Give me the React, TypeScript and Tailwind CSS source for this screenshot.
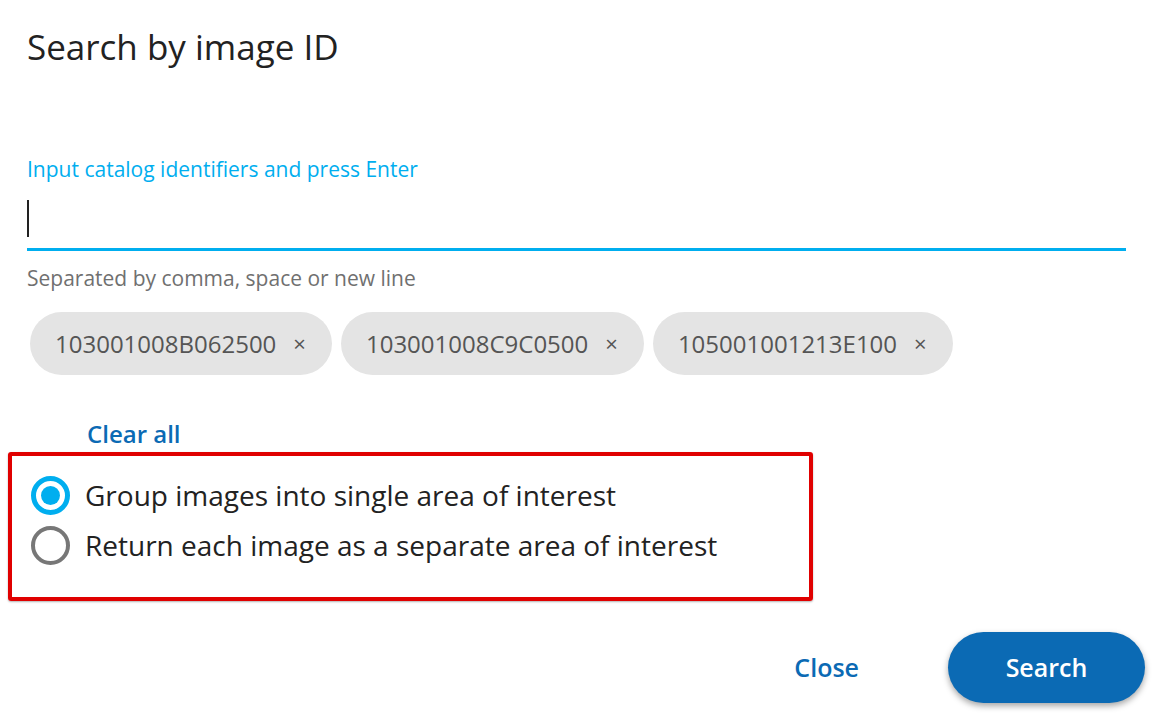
import React, { useState } from 'react';

const ids = ['103001008B062500', '103001008C9C0500', '105001001213E100'];

const Chip: React.FC<{ label: string }> = ({ label }) => (
  <div className="flex h-[63px] items-center rounded-full bg-[#e4e4e4] pl-[25px] pr-[26px] text-[24px] text-[#555555]">
    <span>{label}</span>
    <span className="ml-[17px] text-[22px] text-[#555555]">×</span>
  </div>
);

const Radio: React.FC<{ checked: boolean; label: string }> = ({ checked, label }) => (
  <label className="flex h-[38px] items-center gap-[15px]">
    {checked ? (
      <span className="flex h-[39px] w-[39px] items-center justify-center rounded-full border-[5px] border-[#00aeef]">
        <span className="h-[19px] w-[19px] rounded-full bg-[#00aeef]" />
      </span>
    ) : (
      <span className="h-[39px] w-[39px] rounded-full border-[4px] border-[#777777]" />
    )}
    <span className="text-[28px] leading-[38px] text-[#222222]">{label}</span>
  </label>
);

const App: React.FC = () => {
  const [group] = useState(true);

  return (
    <div
      className="min-h-screen bg-white pl-[27px] pr-[19px] text-[#222222]"
      style={{ fontFamily: '"Open Sans", "Noto Sans", sans-serif' }}
    >
      <h1 className="pt-[25px] text-[35px] leading-[44px]">Search by image ID</h1>

      <div className="mr-[19px]">
        <div className="mt-[86px] text-[21px] leading-[28px] text-[#00aeef]">
          Input catalog identifiers and press Enter
        </div>
        <div className="flex h-[68px] items-center border-b-[3px] border-[#00aeef] pt-[6px]">
          <span className="h-[37px] w-[2px] bg-[#222222]" />
        </div>
        <div className="mt-[13px] text-[21px] leading-[28px] text-[#707070]">
          Separated by comma, space or new line
        </div>
      </div>

      <div className="mt-[20px] flex gap-[9px] pl-[3px]">
        {ids.map((id) => (
          <Chip key={id} label={id} />
        ))}
      </div>

      <div className="mt-[44px] pl-[60px] text-[24px] font-semibold leading-[30px] text-[#0b6ab4]">
        Clear all
      </div>

      <div className="-ml-[19px] mt-[3px] flex h-[149px] w-[805px] flex-col gap-[12px] rounded-[3px] border-[4px] border-[#e00000] pl-[19px] pt-[20px] shadow-[0_1px_2px_rgba(0,0,0,0.3)]">
        <Radio checked={group} label="Group images into single area of interest" />
        <Radio checked={!group} label="Return each image as a separate area of interest" />
      </div>

      <div className="mt-[31px] flex items-center justify-end gap-[89px]">
        <button className="text-[25px] font-semibold text-[#0b6ab4]">Close</button>
        <button className="h-[71px] w-[197px] rounded-full bg-[#0b6ab4] text-[25px] font-semibold text-white shadow-[0_3px_6px_rgba(0,0,0,0.35)]">
          Search
        </button>
      </div>
    </div>
  );
};

export default App;
